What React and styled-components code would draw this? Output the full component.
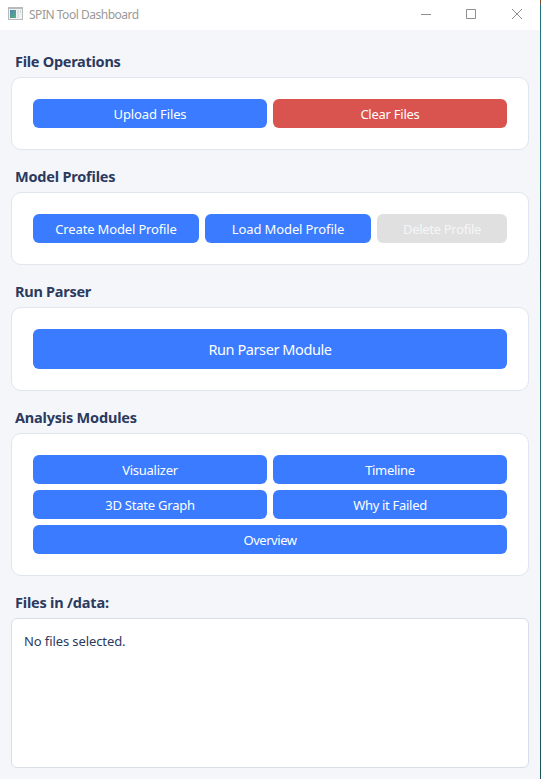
import React from "react";
import styled, { createGlobalStyle } from "styled-components";

const Global = createGlobalStyle`
  * { box-sizing: border-box; }
  body { margin: 0; overflow: hidden; background: #f4f6fa; font-family: "Noto Sans", "Open Sans", sans-serif; }
`;

const Shell = styled.div`
  display: flex;
  width: 541px;
  height: 779px;
`;

const Window = styled.div`
  width: 540px;
  display: flex;
  flex-direction: column;
  background: #f4f6fa;
`;

const DesktopEdge = styled.div`
  width: 1px;
  background: linear-gradient(#7c4a2c 0 4px, #1f7480 5px, #287a86 180px, #24555c 250px, #1f7076 320px, #2a6f75 500px, #18525b 779px);
`;

const TitleBar = styled.header`
  height: 30px;
  flex: none;
  display: flex;
  align-items: center;
  padding-left: 8px;
  background: #fff;
`;

const Title = styled.span`
  flex: 1;
  margin: 0 0 0 6px;
  color: #999;
  font-size: 12px;
  line-height: 16px;
  letter-spacing: ${(p) => p.$track}px;
`;

const WindowButton = styled.button`
  width: 45.5px;
  height: 28px;
  align-self: flex-start;
  padding: 0;
  border: 0;
  background: none;
  display: grid;
  place-items: center;
`;

const Content = styled.main`
  flex: 1;
  display: flex;
  flex-direction: column;
  padding: 5px 11px 11px;
`;

const Heading = styled.h2`
  height: 42px;
  flex: none;
  margin: 0;
  padding: 15px 4px 0;
  color: #2b3a5e;
  font-size: 14.5px;
  font-weight: 700;
  line-height: 22px;
  letter-spacing: ${(p) => p.$track}px;
`;

const Card = styled.section`
  display: grid;
  grid-template-columns: repeat(${(p) => p.$columns}, 1fr);
  gap: 6px;
  padding: 21px;
  border: 1px solid #e0e5ee;
  border-radius: 10px;
  background: #fff;
`;

const fills = { primary: "#3a7bff", danger: "#d9534f", disabled: "#e0e0e0" };

const Button = styled.button`
  height: ${(p) => (p.$large ? 40 : 29)}px;
  grid-column: ${(p) => (p.$wide ? "1 / -1" : "auto")};
  min-width: 0;
  padding: 0;
  border: 0;
  border-radius: 6px;
  background: ${(p) => fills[p.$kind || "primary"]};
  color: ${(p) => (p.$kind === "disabled" ? "#f6f6f6" : "#fff")};
  font-family: inherit;
  font-size: ${(p) => (p.$large ? 14.5 : 13)}px;
  line-height: 18px;
  letter-spacing: ${(p) => p.$track}px;
  white-space: nowrap;
`;

const ProfileCard = styled(Card)`
  grid-template-columns: 166px 166px 130px;
`;

const FileList = styled.div`
  flex: 1;
  padding: 13px 12px;
  border: 1px solid #d9dde6;
  border-radius: 6px;
  background: #fff;
  color: #2b3a5e;
  font-size: 13px;
  line-height: 18px;
  letter-spacing: ${(p) => p.$track}px;
`;

const AppIcon = () => (
  <svg width="15" height="16" viewBox="0 0 15 16" shapeRendering="crispEdges">
    <defs>
      <linearGradient id="screen" x1="0" y1="0" x2="1" y2="1">
        <stop offset="0" stopColor="#4e83b0" />
        <stop offset="1" stopColor="#58b37d" />
      </linearGradient>
    </defs>
    <rect width="15" height="13" fill="#b6babd" />
    <rect x="1" y="2" width="13" height="10" fill="#f0f2f3" />
    <rect x="2" y="3" width="6" height="8" fill="url(#screen)" />
    <rect x="9" y="3" width="2" height="8" fill="#dfe3e6" />
    <rect x="12" y="3" width="1" height="3" fill="#c5dccb" />
  </svg>
);

const Glyph = ({ d }) => (
  <svg width="11" height="10" viewBox="0 0 11 10" fill="none" stroke="#8f8f8f">
    <path d={d} />
  </svg>
);

export default function App() {
  return (
    <Shell>
      <Global />
      <Window>
        <TitleBar>
          <AppIcon />
          <Title $track={-0.48}>SPIN Tool Dashboard</Title>
          <WindowButton aria-label="Minimize"><Glyph d="M0 5.5H10" /></WindowButton>
          <WindowButton aria-label="Maximize"><Glyph d="M.5 .5H9.5V9.5H.5Z" /></WindowButton>
          <WindowButton aria-label="Close"><Glyph d="M0 0L10 10M10 0L0 10" /></WindowButton>
        </TitleBar>
        <Content>
          <Heading $track={-0.27}>File Operations</Heading>
          <Card $columns={2}>
            <Button $track={-0.12}>Upload Files</Button>
            <Button $track={-0.25} $kind="danger">Clear Files</Button>
          </Card>
          <Heading $track={-0.2}>Model Profiles</Heading>
          <ProfileCard>
            <Button $track={-0.15}>Create Model Profile</Button>
            <Button $track={-0.12}>Load Model Profile</Button>
            <Button $track={-0.3} $kind="disabled" disabled>Delete Profile</Button>
          </ProfileCard>
          <Heading $track={-0.27}>Run Parser</Heading>
          <Card $columns={1}>
            <Button $track={-0.42} $large>Run Parser Module</Button>
          </Card>
          <Heading $track={-0.2}>Analysis Modules</Heading>
          <Card $columns={2}>
            <Button $track={-0.25}>Visualizer</Button>
            <Button $track={-0.3}>Timeline</Button>
            <Button $track={-0.22}>3D State Graph</Button>
            <Button $track={-0.3}>Why it Failed</Button>
            <Button $track={-0.45} $wide>Overview</Button>
          </Card>
          <Heading $track={-0.2}>Files in /data:</Heading>
          <FileList $track={-0.1}>No files selected.</FileList>
        </Content>
      </Window>
      <DesktopEdge />
    </Shell>
  );
}
